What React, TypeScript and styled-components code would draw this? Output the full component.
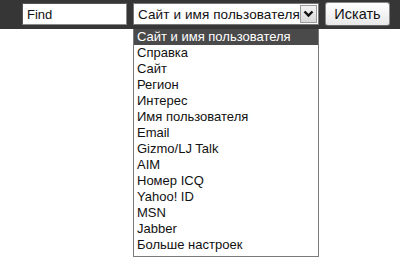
import React from 'react';
import styled, {createGlobalStyle} from 'styled-components';

const options = [
    'Сайт и имя пользователя',
    'Справка',
    'Сайт',
    'Регион',
    'Интерес',
    'Имя пользователя',
    'Email',
    'Gizmo/LJ Talk',
    'AIM',
    'Номер ICQ',
    'Yahoo! ID',
    'MSN',
    'Jabber',
    'Больше настроек',
];

const App: React.FC = () => {
    const selected = 0;
    return (
        <>
            <GlobalStyle/>
            <Page>
                <Bar>
                    <SearchInput defaultValue="Find"/>
                    <SelectWrap>
                        <SelectBox>
                            <SelectText>{options[selected]}</SelectText>
                            <ArrowBox>
                                <svg width="11" height="8" viewBox="0 0 11 8">
                                    <path d="M1.5 1.5 L5.5 5.5 L9.5 1.5" fill="none" stroke="#111" strokeWidth="2.4"/>
                                </svg>
                            </ArrowBox>
                        </SelectBox>
                        <DropList>
                            {options.map((o, i) => (
                                <ListItem key={o} $active={i === selected}>{o}</ListItem>
                            ))}
                        </DropList>
                    </SelectWrap>
                    <SearchButton>Искать</SearchButton>
                </Bar>
            </Page>
        </>
    );
};

const GlobalStyle = createGlobalStyle`
  html, body, #root {
    height: 100%;
  }
  body {
    margin: 0;
    background: #fff;
    font-family: "Liberation Sans", Arial, sans-serif;
  }
`;

const Page = styled.div`
  min-height: 268px;
  background: #fff;
`;

const Bar = styled.div`
  position: relative;
  display: flex;
  align-items: flex-start;
  height: 29px;
  padding: 3px 0 0 22px;
  box-sizing: border-box;
  background: #363636;
`;

const SearchInput = styled.input`
  width: 105px;
  height: 22px;
  box-sizing: border-box;
  margin: 0;
  padding: 0 4px;
  border: 1px solid #8a8a8a;
  border-top-color: #555;
  border-left-color: #555;
  background: #fff;
  font-family: "Liberation Sans", Arial, sans-serif;
  font-size: 13px;
  color: #111;
  outline: none;
`;

const SelectWrap = styled.div`
  position: relative;
  margin-left: 6px;
`;

const SelectBox = styled.div`
  display: flex;
  align-items: center;
  width: 186px;
  height: 22px;
  box-sizing: border-box;
  padding: 0 1px 0 4px;
  background: #fff;
  border: 1px solid #777;
`;

const SelectText = styled.span`
  flex: 1;
  font-size: 13.5px;
  color: #111;
  white-space: nowrap;
  letter-spacing: 0.1px;
`;

const ArrowBox = styled.div`
  display: flex;
  align-items: center;
  justify-content: center;
  width: 17px;
  height: 18px;
  box-sizing: border-box;
  border: 1px solid #9a9a9a;
  background: linear-gradient(#f4f4f4, #d8d8d8);
`;

const DropList = styled.div`
  position: absolute;
  z-index: 10;
  top: 26px;
  left: 0;
  width: 186px;
  box-sizing: border-box;
  padding-bottom: 3px;
  background: #fff;
  border: 1px solid #7a7a7a;
  border-top: none;
`;

const ListItem = styled.div<{ $active?: boolean }>`
  height: 16px;
  line-height: 16px;
  padding-left: 3px;
  font-size: 13px;
  white-space: nowrap;
  color: ${p => (p.$active ? '#fff' : '#111')};
  background: ${p => (p.$active ? '#4a4a4a' : 'transparent')};
`;

const SearchButton = styled.button`
  margin: -1px 0 0 6px;
  width: 65px;
  height: 24px;
  box-sizing: border-box;
  padding: 0;
  border: 1px solid #888;
  border-bottom-color: #666;
  border-radius: 3px;
  background: linear-gradient(#ffffff, #e8e8e8);
  font-family: "Liberation Sans", Arial, sans-serif;
  font-size: 14.5px;
  color: #111;
`;

export default App;
